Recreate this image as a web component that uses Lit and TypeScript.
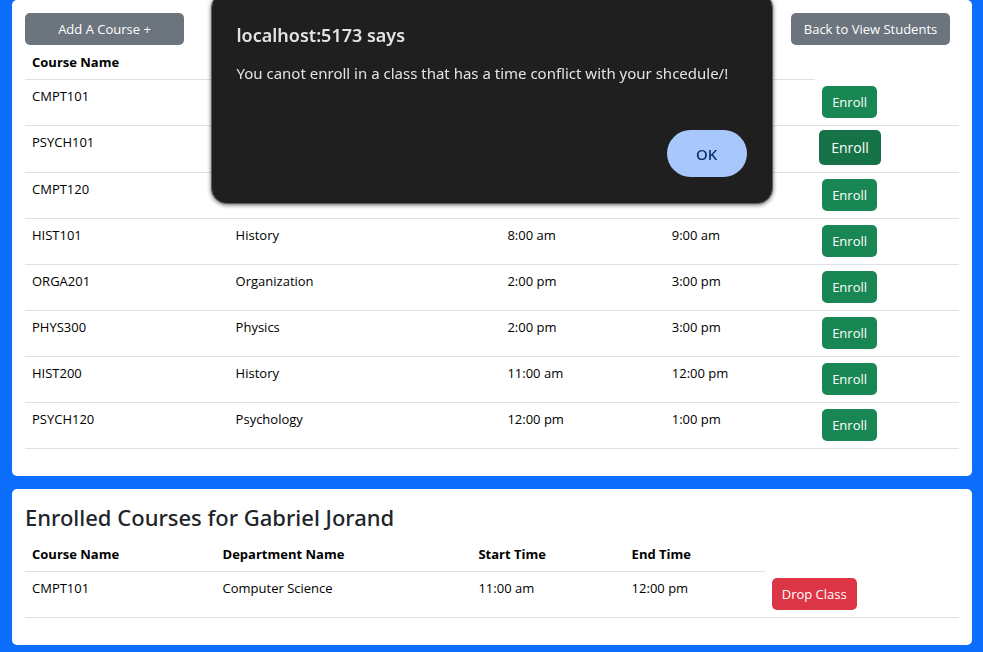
import { LitElement, html, css } from "lit";
import { customElement, property } from "lit/decorators.js";
import { classMap } from "lit/directives/class-map.js";

interface Course {
  name: string;
  department?: string;
  start?: string;
  end?: string;
  active?: boolean;
}

const AVAILABLE: Course[] = [
  { name: "CMPT101" },
  { name: "PSYCH101", active: true },
  { name: "CMPT120" },
  { name: "HIST101", department: "History", start: "8:00 am", end: "9:00 am" },
  { name: "ORGA201", department: "Organization", start: "2:00 pm", end: "3:00 pm" },
  { name: "PHYS300", department: "Physics", start: "2:00 pm", end: "3:00 pm" },
  { name: "HIST200", department: "History", start: "11:00 am", end: "12:00 pm" },
  { name: "PSYCH120", department: "Psychology", start: "12:00 pm", end: "1:00 pm" },
];

const ENROLLED: Course[] = [
  { name: "CMPT101", department: "Computer Science", start: "11:00 am", end: "12:00 pm" },
];

const buttonStyles = css`
  .btn {
    box-sizing: border-box;
    height: 32px;
    padding: 0 10px;
    border: 0;
    border-radius: 5px;
    font: 400 13px/20px "Open Sans", "Noto Sans", sans-serif;
    color: #fff;
    white-space: nowrap;
    cursor: pointer;
  }
  .secondary {
    background: #6c757d;
    min-width: 159px;
  }
  .success {
    background: #198754;
  }
  .danger {
    background: #dc3545;
  }
  .active {
    height: 35px;
    margin: -2px -3px 0;
    padding: 0 12px;
    background: #157347;
    font-size: 14px;
  }
`;

@customElement("course-table")
class CourseTable extends LitElement {
  @property({ attribute: false }) courses: Course[] = [];
  @property() action = "";
  @property() variant = "success";

  static styles = [
    buttonStyles,
    css`
      :host {
        display: block;
        margin-bottom: 14px;
      }
      .table {
        width: 100%;
        table-layout: fixed;
        border-collapse: separate;
        border-spacing: 0;
        font-family: "Open Sans", "Noto Sans", sans-serif;
        font-size: 13px;
        line-height: 21px;
        color: #000;
      }
      .cell {
        box-sizing: border-box;
        padding: 6px 7px 7px;
        border-bottom: 1px solid #dee2e6;
        text-align: left;
        vertical-align: top;
        white-space: nowrap;
      }
      .head {
        padding: 7px 7px 6px;
        font-weight: 700;
      }
      .blank {
        padding: 0;
      }
      .actions {
        line-height: 0;
      }
      .success-table .c1 { width: 21.8%; }
      .success-table .c2 { width: 29.1%; }
      .success-table .c3 { width: 17.6%; }
      .success-table .c4 { width: 16.1%; }
      .danger-table .c1 { width: 20.4%; }
      .danger-table .c2 { width: 27.4%; }
      .danger-table .c3 { width: 16.4%; }
      .danger-table .c4 { width: 15%; }
    `,
  ];

  render() {
    return html`
      <table class="table ${this.variant}-table">
        <thead>
          <tr>
            <th class="cell head c1" scope="col">Course Name</th>
            <th class="cell head c2" scope="col">Department Name</th>
            <th class="cell head c3" scope="col">Start Time</th>
            <th class="cell head c4" scope="col">End Time</th>
            <td class="blank"></td>
          </tr>
        </thead>
        <tbody>
          ${this.courses.map(
            (c) => html`
              <tr>
                <td class="cell">${c.name}</td>
                <td class="cell">${c.department}</td>
                <td class="cell">${c.start}</td>
                <td class="cell">${c.end}</td>
                <td class="cell actions">
                  <button
                    type="button"
                    class=${classMap({ btn: true, [this.variant]: true, active: !!c.active })}
                  >${this.action}</button>
                </td>
              </tr>
            `
          )}
        </tbody>
      </table>
    `;
  }
}

@customElement("app-root")
class AppRoot extends LitElement {
  static styles = [
    buttonStyles,
    css`
      :host {
        display: block;
        box-sizing: border-box;
        min-height: 100vh;
        background: #0d6efd;
        font-family: "Noto Sans", "Open Sans", sans-serif;
      }
      .page {
        display: flex;
        flex-direction: column;
        gap: 13px;
        padding: 0 11px 7px 12px;
      }
      .card {
        padding: 13px;
        border-radius: 5px;
        background: #fff;
      }
      .toolbar {
        display: flex;
        justify-content: space-between;
        padding-right: 9px;
      }
      .title {
        margin: 0 0 5px;
        font-size: 22px;
        font-weight: 500;
        line-height: 30px;
        color: #212529;
      }
      .dialog {
        position: fixed;
        top: -8px;
        left: 0;
        right: 0;
        box-sizing: border-box;
        width: 562px;
        max-width: 100%;
        margin: 0 auto;
        padding: 30px 25px 26px;
        border: 1px solid #5c5c5c;
        border-radius: 16px;
        background: #1f1f1f;
        color: #e3e3e3;
        box-shadow: 0 1px 4px rgba(0, 0, 0, 0.6);
        display: flex;
        flex-direction: column;
      }
      .origin {
        margin: 0 0 14px;
        font-size: 18px;
        font-weight: 600;
        line-height: 24px;
      }
      .message {
        margin: 0 0 45px;
        font-size: 15px;
        line-height: 24px;
      }
      .ok {
        align-self: flex-end;
        width: 80px;
        height: 47px;
        padding: 0;
        border: 0;
        border-radius: 24px;
        background: #a8c7fa;
        color: #062e6f;
        font: 500 15px/20px "Noto Sans", "Open Sans", sans-serif;
        cursor: pointer;
      }
    `,
  ];

  render() {
    return html`
      <main class="page">
        <section class="card" aria-label="Courses">
          <div class="toolbar">
            <button type="button" class="btn secondary">Add A Course +</button>
            <button type="button" class="btn secondary">Back to View Students</button>
          </div>
          <course-table .courses=${AVAILABLE} action="Enroll" variant="success"></course-table>
        </section>
        <section class="card">
          <h2 class="title">Enrolled Courses for Gabriel Jorand</h2>
          <course-table .courses=${ENROLLED} action="Drop Class" variant="danger"></course-table>
        </section>
      </main>
      <div class="dialog" role="alertdialog" aria-labelledby="origin" aria-describedby="message">
        <h1 class="origin" id="origin">localhost:5173 says</h1>
        <p class="message" id="message">
          You canot enroll in a class that has a time conflict with your shcedule/!
        </p>
        <button type="button" class="ok">OK</button>
      </div>
    `;
  }
}
